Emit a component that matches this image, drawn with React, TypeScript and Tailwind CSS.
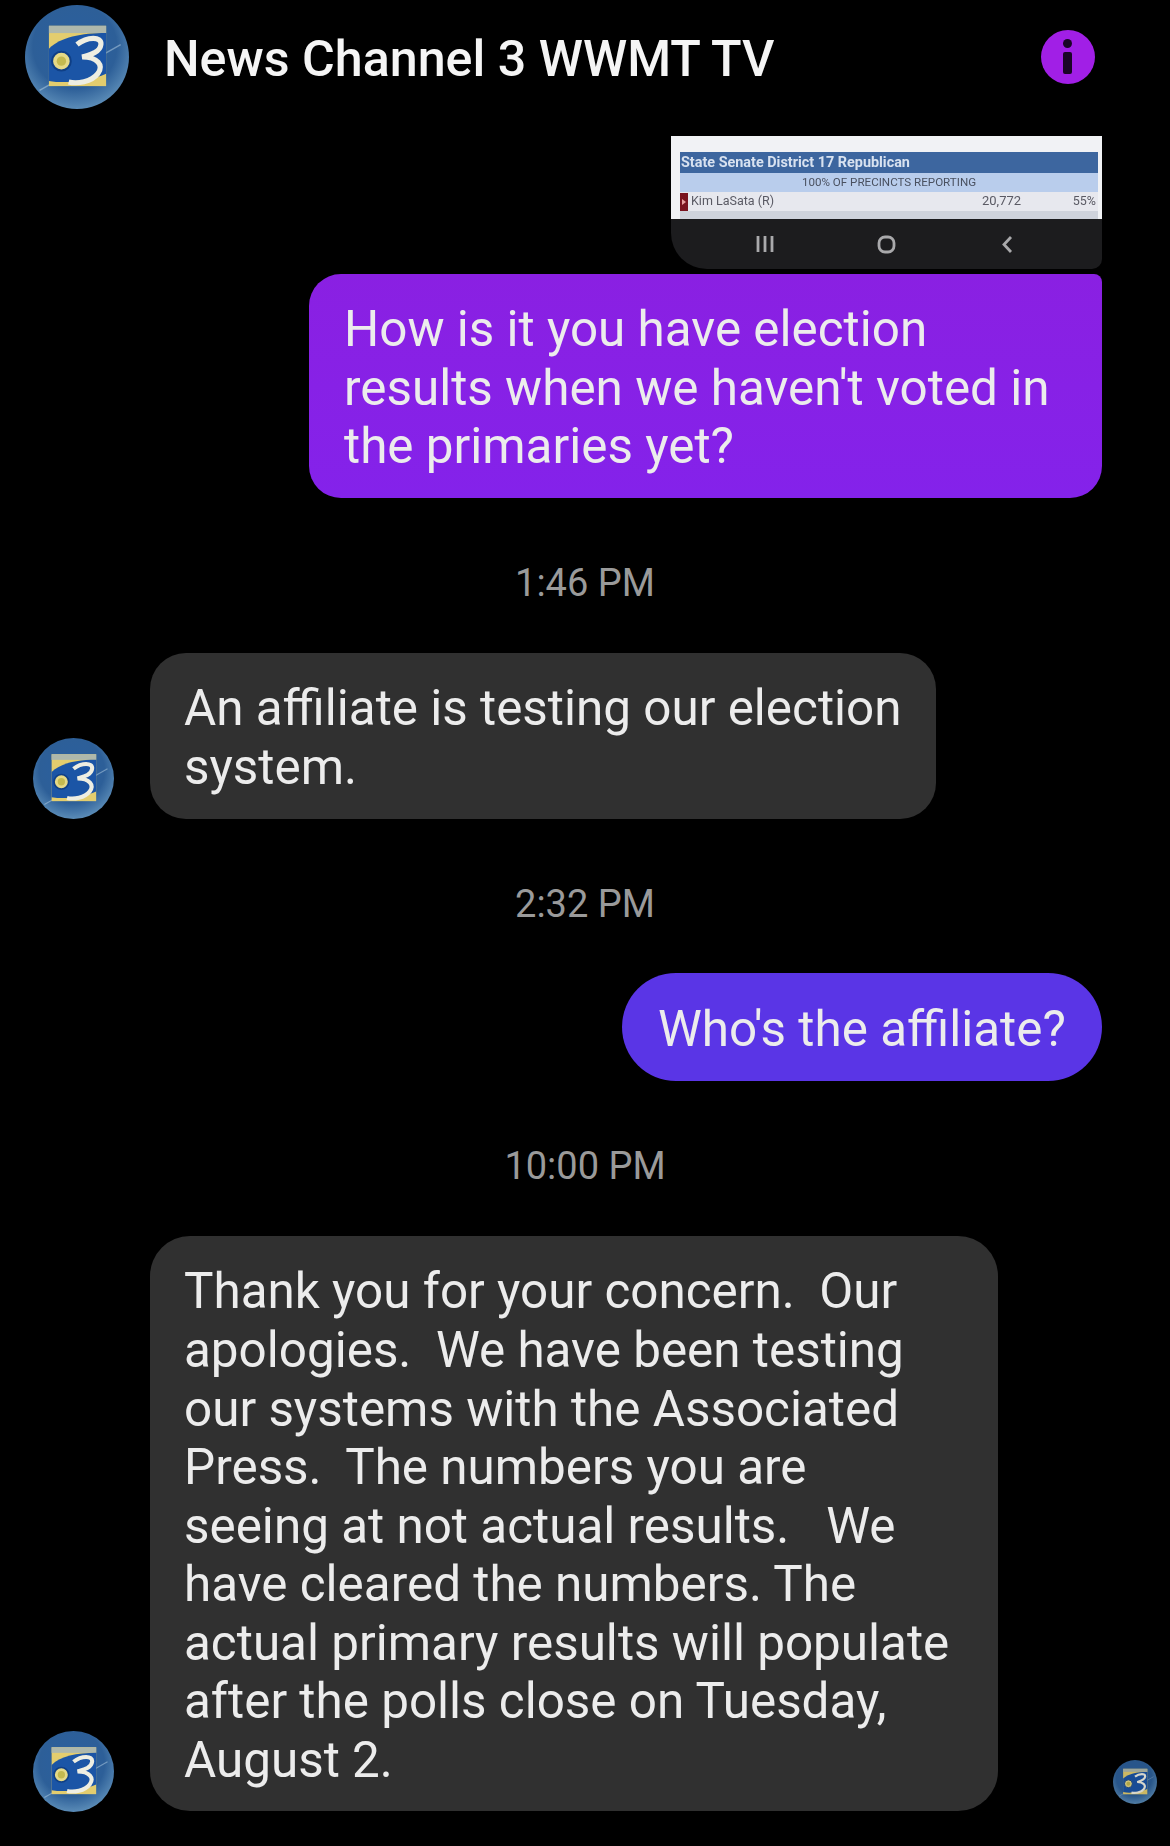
import { useId } from 'react';

const font = { fontFamily: 'Roboto, sans-serif' };

// station logo on the blue ball
function Logo({ className }: { className: string }) {
  const id = useId();
  return (
    <svg viewBox="0 0 100 100" className={`blur-[0.6px] ${className}`}>
      <defs>
        <radialGradient id={id} cx="48%" cy="40%" r="62%">
          <stop offset="0%" stopColor="#2a5f9f" />
          <stop offset="65%" stopColor="#2d5f98" />
          <stop offset="100%" stopColor="#5f90ba" />
        </radialGradient>
      </defs>
      <circle cx="50" cy="50" r="50" fill={`url(#${id})`} />
      <path d="M14 82 L92 38" stroke="#b9d3e6" strokeWidth="1.4" opacity="0.5" />
      <rect x="23" y="20" width="55" height="58" fill="#e3cd6e" />
      <rect x="23" y="20" width="55" height="7" fill="#aeb8ac" />
      <path d="M23 42 C34 31 54 27 78 27 L78 66 C62 73 40 76 23 73 Z" fill="#1b55a6" />
      <circle cx="35" cy="54" r="9" fill="#e5d987" stroke="#0f3f86" strokeWidth="2" />
      <circle cx="35" cy="54" r="4.5" fill="#c4b94f" />
      <path d="M50 38 C60 30 74 30 73 38 C72 46 62 48 55 50 C70 50 76 58 70 66 C64 74 50 76 42 74" fill="none" stroke="#eeeee2" strokeWidth="5" />
    </svg>
  );
}

function Stamp({ children }: { children: string }) {
  return <div className="pl-[68px] text-center text-[38px] leading-[44px] text-[#9a9a9a]">{children}</div>;
}

export default function App() {
  return (
    <div style={font} className="h-[1846px] w-[1170px] overflow-hidden bg-black text-[49.4px] leading-[58.6px] text-[#ececec]">
      {/* Header */}
      <div className="flex h-[114px] items-center pl-[25px] pr-[75px]">
        <Logo className="h-[104px] w-[104px] shrink-0" />
        <div className="ml-[35px] flex-1 pt-[4px] text-[50.2px] font-medium leading-[56px] text-[#f5f5f5]">News Channel 3 WWMT TV</div>
        <div className="relative h-[54px] w-[54px] rounded-full bg-[#a11fe6]">
          <div className="absolute left-[22px] top-[9px] h-[9px] w-[9px] rounded-full bg-[#1a0526]" />
          <div className="absolute left-[22px] top-[22px] h-[22px] w-[9px] rounded-[2px] bg-[#1a0526]" />
        </div>
      </div>

      <div className="flex flex-col pr-[68px]">
        {/* Attached screenshot */}
        <div className="mt-[22px] w-[431px] self-end overflow-hidden rounded-bl-[36px] rounded-br-[10px] bg-[#1c1c1e]">
          <div className="flex h-[83px] flex-col bg-[#f1f2f5] pl-[9px] pr-[4px] pt-[16px] blur-[0.4px]">
            <div className="h-[21px] shrink-0 bg-[#3d669f] pl-[1px] text-[14.4px] font-bold leading-[21px] text-[#d8e2f0]">State Senate District 17 Republican</div>
            <div className="h-[19px] shrink-0 bg-[#b9cdec] text-center text-[11.6px] leading-[18px] text-[#4a5160]">100% OF PRECINCTS REPORTING</div>
            <div className="flex h-[19px] shrink-0 items-center bg-[#e7e8ee] pr-[2px] text-[12.5px] text-[#5a5a64]">
              <div className="mr-[3px] flex h-[18px] w-[8px] items-center justify-center bg-[#7a1420]">
                <div className="h-0 w-0 border-y-[3px] border-l-[4px] border-y-transparent border-l-[#e8a0a0]" />
              </div>
              <div className="w-[291px]">Kim LaSata (R)</div>
              <div className="w-[85px] text-[13px]">20,772</div>
              <div className="flex-1 text-right">55%</div>
            </div>
            <div className="h-[8px] bg-[#cfd3dc]" />
          </div>
          <div className="flex h-[50px] items-center">
            <svg viewBox="0 0 431 50" className="h-[50px] w-[431px] blur-[0.4px]">
              <g stroke="#a9a9ab" strokeWidth="2.8" fill="none">
                <path d="M87 17 V33 M94 17 V33 M101 17 V33" />
                <rect x="208" y="18" width="15" height="15" rx="6" />
                <path d="M340 18 L333 25.5 L340 33" />
              </g>
            </svg>
          </div>
        </div>

        {/* Question */}
        <div className="mt-[5px] flex h-[224px] w-[793px] items-center self-end rounded-[32px] rounded-tr-[8px] bg-gradient-to-b from-[#8a20e2] to-[#8422ea] pl-[35px] pt-[4px]">
          <div>How is it you have election<br />results when we haven't voted in<br />the primaries yet?</div>
        </div>

        <div className="mt-[63px]"><Stamp>1:46 PM</Stamp></div>

        <div className="mt-[48px] flex items-end">
          <Logo className="ml-[33px] h-[81px] w-[81px] shrink-0" />
          <div className="ml-[36px] flex h-[166px] w-[786px] items-center rounded-[36px] bg-[#303030] pl-[34px] pt-[4px]">
            <div>An affiliate is testing our election<br />system.</div>
          </div>
        </div>

        <div className="mt-[63px]"><Stamp>2:32 PM</Stamp></div>

        {/* Reply */}
        <div className="mt-[47px] flex h-[108px] w-[480px] items-center self-end rounded-[54px] bg-[#5a35e6] pl-[36px] pt-[4px]">
          <div>Who's the affiliate?</div>
        </div>

        <div className="mt-[63px]"><Stamp>10:00 PM</Stamp></div>

        <div className="mt-[48px] flex items-end">
          <Logo className="mb-[-1px] ml-[33px] h-[81px] w-[81px] shrink-0" />
          <div className="ml-[36px] flex h-[575px] w-[848px] items-center rounded-[40px] bg-[#303030] pl-[34px] pt-[5px]">
            <div>
              Thank you for your concern.&nbsp; Our<br />
              apologies.&nbsp; We have been testing<br />
              our systems with the Associated<br />
              Press.&nbsp; The numbers you are<br />
              seeing at not actual results.&nbsp;&nbsp; We<br />
              have cleared the numbers. The<br />
              actual primary results will populate<br />
              after the polls close on Tuesday,<br />
              August 2.
            </div>
          </div>
          <div className="flex-1" />
          <Logo className="-mr-[55px] mb-[7px] h-[44px] w-[44px] shrink-0 opacity-90" />
        </div>
      </div>
    </div>
  );
}
